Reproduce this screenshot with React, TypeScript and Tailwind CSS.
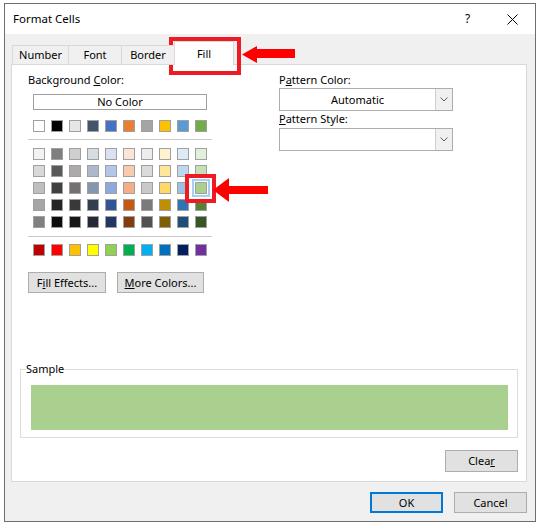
import React from 'react';

const themeRow = ['#FFFFFF', '#000000', '#E7E6E6', '#44546A', '#4472C4', '#ED7D31', '#A5A5A5', '#FFC000', '#5B9BD5', '#70AD47'];

const shadeRows = [
  ['#F2F2F2', '#7F7F7F', '#D0CECE', '#D6DCE4', '#D9E1F2', '#FCE4D6', '#EDEDED', '#FFF2CC', '#DDEBF7', '#E2EFDA'],
  ['#D9D9D9', '#595959', '#AEAAAA', '#ACB9CA', '#B4C6E7', '#F8CBAD', '#DBDBDB', '#FFE699', '#BDD7EE', '#C6E0B4'],
  ['#BFBFBF', '#404040', '#757171', '#8497B0', '#8EA9DB', '#F4B084', '#C9C9C9', '#FFD966', '#9BC2E6', '#A9D08E'],
  ['#A6A6A6', '#262626', '#3A3838', '#333F4F', '#305496', '#C65911', '#7B7B7B', '#BF8F00', '#2F75B5', '#548235'],
  ['#808080', '#0D0D0D', '#161616', '#222B35', '#203764', '#833C0C', '#525252', '#806000', '#1F4E78', '#375623'],
];

const standardRow = ['#C00000', '#FF0000', '#FFC000', '#FFFF00', '#92D050', '#00B050', '#00B0F0', '#0070C0', '#002060', '#7030A0'];

function Swatch({ color, selected = false }: { color: string; selected?: boolean }) {
  return (
    <div
      className={
        selected
          ? 'w-[12px] h-[12px] border border-[#a0a0a0] ring-2 ring-[#a6d0f3] ring-offset-1'
          : 'w-[12px] h-[12px] border border-[#a0a0a0]'
      }
      style={{ backgroundColor: color }}
    />
  );
}

function SwatchRow({ colors, selectedIndex = -1 }: { colors: string[]; selectedIndex?: number }) {
  return (
    <div className="flex gap-[6px]">
      {colors.map((c, i) => (
        <Swatch key={i} color={c} selected={i === selectedIndex} />
      ))}
    </div>
  );
}

function Dropdown({ value }: { value: string }) {
  return (
    <div className="flex h-[23px] w-[174px] border border-[#adadad] bg-white">
      <div className="flex-1 flex items-center justify-center">{value}</div>
      <div className="w-[17px] border-l border-[#cfcfcf] bg-[#f0f0f0] flex items-center justify-center">
        <svg width="8" height="5" viewBox="0 0 8 5">
          <polyline points="0.5,0.5 4,4 7.5,0.5" fill="none" stroke="#606060" strokeWidth="1" />
        </svg>
      </div>
    </div>
  );
}

export default function App() {
  return (
    <div className="relative w-[539px] h-[523px] overflow-hidden bg-white pt-[3px] pl-[4px] font-['Segoe_UI','Noto_Sans',sans-serif] text-[11px] leading-[16px] text-black">
      <div className="w-[532px] h-[519px] border border-[#6e6e6e] bg-[#f0f0f0] flex flex-col">
        {/* title bar */}
        <div className="h-[30px] shrink-0 bg-white flex items-center pl-[8px]">
          <span className="flex-1 text-[11.5px]">Format Cells</span>
          <span className="w-[45px] text-center text-[12px]">?</span>
          <span className="w-[45px] flex items-center justify-center">
            <svg width="11" height="11" viewBox="0 0 11 11">
              <path d="M0.5 0.5 L10.5 10.5 M10.5 0.5 L0.5 10.5" stroke="#000" strokeWidth="1" />
            </svg>
          </span>
        </div>

        <div className="flex flex-col pl-[6px] pr-[8px]">
          {/* tabs */}
          <div className="relative z-10 -mb-px mt-[7px] ml-[1px] flex items-end h-[24px]">
            <div className="w-[57px] h-[20px] border border-[#d9d9d9] bg-[#f0f0f0] flex items-center justify-center">Number</div>
            <div className="w-[53px] h-[20px] border border-l-0 border-[#d9d9d9] bg-[#f0f0f0] flex items-center justify-center">Font</div>
            <div className="w-[53px] h-[20px] border border-l-0 border-[#d9d9d9] bg-[#f0f0f0] flex items-center justify-center">Border</div>
            <div className="-ml-px w-[60px] h-[24px] border border-b-0 border-[#d9d9d9] bg-white flex items-center justify-center pt-[1px]">Fill</div>
          </div>

          {/* panel */}
          <div className="h-[418px] bg-white border border-[#d9d9d9] flex flex-col px-[8px] pt-[7px]">
            <div className="flex">
              <div className="ml-[8px] w-[184px] flex flex-col">
                <div>
                  Background <span className="underline">C</span>olor:
                </div>
                <div className="mt-[6px] ml-[5px] w-[174px] h-[16px] border border-[#a0a0a0] flex items-center justify-center">
                  No Color
                </div>
                <div className="mt-[10px] ml-[5px]">
                  <SwatchRow colors={themeRow} />
                </div>
                <div className="mt-[7px] h-px bg-[#c8c8c8]" />
                <div className="mt-[8px] ml-[5px] flex flex-col gap-[5px]">
                  {shadeRows.map((row, i) => (
                    <SwatchRow key={i} colors={row} selectedIndex={i === 2 ? 9 : -1} />
                  ))}
                </div>
                <div className="mt-[8px] h-px bg-[#c8c8c8]" />
                <div className="mt-[7px] ml-[5px]">
                  <SwatchRow colors={standardRow} />
                </div>
                <div className="mt-[16px] flex gap-[11px]">
                  <div className="w-[78px] h-[21px] border border-[#adadad] bg-[#e1e1e1] flex items-center justify-center">
                    <span>
                      F<span className="underline">i</span>ll Effects...
                    </span>
                  </div>
                  <div className="w-[87px] h-[21px] border border-[#adadad] bg-[#e1e1e1] flex items-center justify-center">
                    <span>
                      <span className="underline">M</span>ore Colors...
                    </span>
                  </div>
                </div>
              </div>

              <div className="ml-[67px] w-[174px] flex flex-col">
                <div>
                  P<span className="underline">a</span>ttern Color:
                </div>
                <Dropdown value="Automatic" />
                <div>
                  <span className="underline">P</span>attern Style:
                </div>
                <div className="mt-px">
                  <Dropdown value="" />
                </div>
              </div>
            </div>

            {/* sample */}
            <fieldset className="mt-[68px] border border-[#dcdcdc]">
              <legend className="ml-[5px]">Sample</legend>
              <div className="ml-[10px] mr-[9px] mt-[8px] mb-[7px] h-[45px] bg-[#a9d08e]" />
            </fieldset>

            <div className="self-end mt-[12px] w-[73px] h-[22px] border border-[#adadad] bg-[#e1e1e1] flex items-center justify-center">
              <span>
                Clea<span className="underline">r</span>
              </span>
            </div>
          </div>

          {/* footer */}
          <div className="mt-[10px] flex justify-end gap-[11px]">
            <div className="w-[73px] h-[21px] border-2 border-[#0078d7] bg-[#e1e1e1] flex items-center justify-center">OK</div>
            <div className="w-[73px] h-[21px] border border-[#adadad] bg-[#e1e1e1] flex items-center justify-center">Cancel</div>
          </div>
        </div>
      </div>

      {/* annotations */}
      <div className="absolute left-[169px] top-[37px] w-[72px] h-[38px] border-4 border-[#ed1c24]" />
      <svg className="absolute left-[240px] top-[44px]" width="58" height="22" viewBox="0 0 58 22">
        <polygon points="2,10.5 17,2 17,5 55,5 55,14 17,14 17,19" fill="#fe0000" />
      </svg>
      <div className="absolute left-[185px] top-[174px] w-[31px] h-[29px] border-4 border-[#ed1c24]" />
      <svg className="absolute left-[212px] top-[177px]" width="58" height="26" viewBox="0 0 58 26">
        <polygon points="1,13 17,1 17,9 56,9 56,17 17,17 17,25" fill="#fe0000" />
      </svg>
    </div>
  );
}
